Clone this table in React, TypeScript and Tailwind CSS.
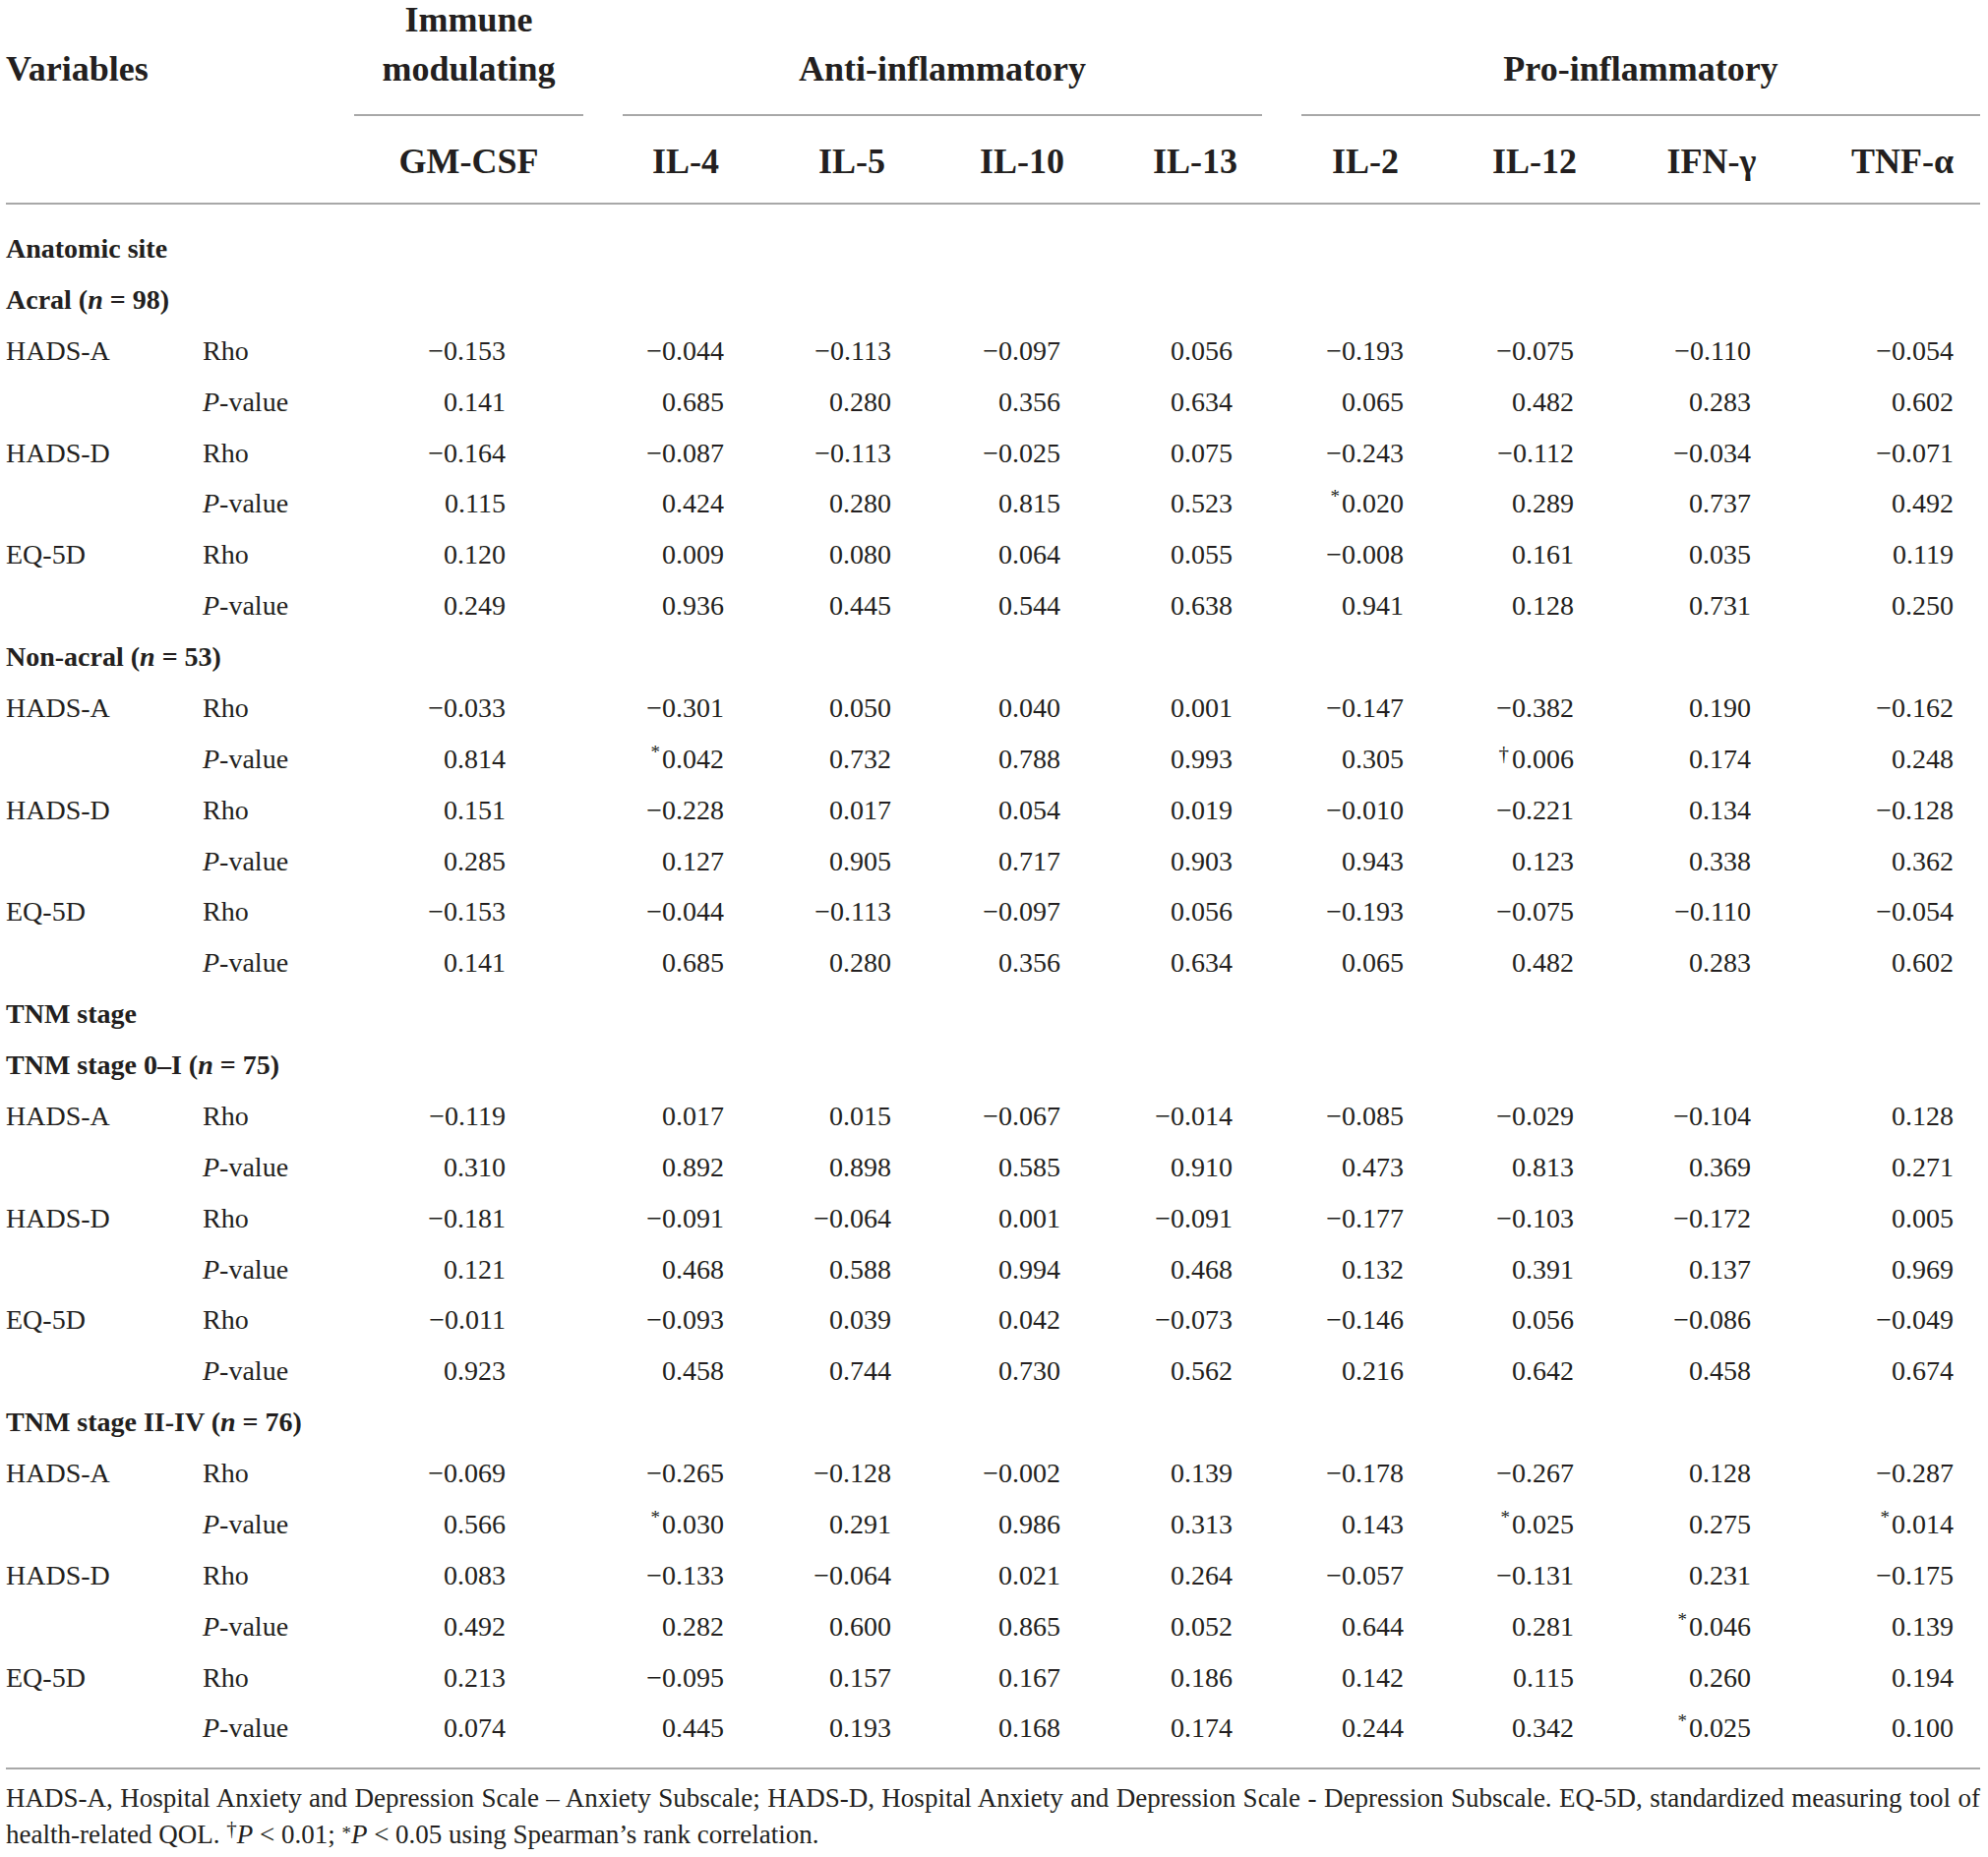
import React from "react";

type Val = string;

const cols = [
  { name: "GM-CSF", hdr: "", pr: "pr-[99px]" },
  { name: "IL-4", hdr: "", pr: "pr-[45px]" },
  { name: "IL-5", hdr: "", pr: "pr-[45px]" },
  { name: "IL-10", hdr: "", pr: "pr-[49px]" },
  { name: "IL-13", hdr: "", pr: "pr-[50px]" },
  { name: "IL-2", hdr: "", pr: "pr-[46px]" },
  { name: "IL-12", hdr: "", pr: "pr-[47px]" },
  { name: "IFN-γ", hdr: "", pr: "pr-[53px]" },
  { name: "TNF-α", hdr: "pl-[22px]", pr: "pr-[27px]" },
];

type Block = { label: string; rho: Val[]; p: Val[] };
type Group = { title: React.ReactNode; blocks: Block[] };
type Section = { title: string; groups: Group[] };

const acralA: Block = {
  label: "HADS-A",
  rho: ["−0.153", "−0.044", "−0.113", "−0.097", "0.056", "−0.193", "−0.075", "−0.110", "−0.054"],
  p: ["0.141", "0.685", "0.280", "0.356", "0.634", "0.065", "0.482", "0.283", "0.602"],
};

const sections: Section[] = [
  {
    title: "Anatomic site",
    groups: [
      {
        title: (
          <>
            Acral (<i>n</i> = 98)
          </>
        ),
        blocks: [
          acralA,
          {
            label: "HADS-D",
            rho: ["−0.164", "−0.087", "−0.113", "−0.025", "0.075", "−0.243", "−0.112", "−0.034", "−0.071"],
            p: ["0.115", "0.424", "0.280", "0.815", "0.523", "*0.020", "0.289", "0.737", "0.492"],
          },
          {
            label: "EQ-5D",
            rho: ["0.120", "0.009", "0.080", "0.064", "0.055", "−0.008", "0.161", "0.035", "0.119"],
            p: ["0.249", "0.936", "0.445", "0.544", "0.638", "0.941", "0.128", "0.731", "0.250"],
          },
        ],
      },
      {
        title: (
          <>
            Non-acral (<i>n</i> = 53)
          </>
        ),
        blocks: [
          {
            label: "HADS-A",
            rho: ["−0.033", "−0.301", "0.050", "0.040", "0.001", "−0.147", "−0.382", "0.190", "−0.162"],
            p: ["0.814", "*0.042", "0.732", "0.788", "0.993", "0.305", "†0.006", "0.174", "0.248"],
          },
          {
            label: "HADS-D",
            rho: ["0.151", "−0.228", "0.017", "0.054", "0.019", "−0.010", "−0.221", "0.134", "−0.128"],
            p: ["0.285", "0.127", "0.905", "0.717", "0.903", "0.943", "0.123", "0.338", "0.362"],
          },
          { ...acralA, label: "EQ-5D" },
        ],
      },
    ],
  },
  {
    title: "TNM stage",
    groups: [
      {
        title: (
          <>
            TNM stage 0–I (<i>n</i> = 75)
          </>
        ),
        blocks: [
          {
            label: "HADS-A",
            rho: ["−0.119", "0.017", "0.015", "−0.067", "−0.014", "−0.085", "−0.029", "−0.104", "0.128"],
            p: ["0.310", "0.892", "0.898", "0.585", "0.910", "0.473", "0.813", "0.369", "0.271"],
          },
          {
            label: "HADS-D",
            rho: ["−0.181", "−0.091", "−0.064", "0.001", "−0.091", "−0.177", "−0.103", "−0.172", "0.005"],
            p: ["0.121", "0.468", "0.588", "0.994", "0.468", "0.132", "0.391", "0.137", "0.969"],
          },
          {
            label: "EQ-5D",
            rho: ["−0.011", "−0.093", "0.039", "0.042", "−0.073", "−0.146", "0.056", "−0.086", "−0.049"],
            p: ["0.923", "0.458", "0.744", "0.730", "0.562", "0.216", "0.642", "0.458", "0.674"],
          },
        ],
      },
      {
        title: (
          <>
            TNM stage II-IV (<i>n</i> = 76)
          </>
        ),
        blocks: [
          {
            label: "HADS-A",
            rho: ["−0.069", "−0.265", "−0.128", "−0.002", "0.139", "−0.178", "−0.267", "0.128", "−0.287"],
            p: ["0.566", "*0.030", "0.291", "0.986", "0.313", "0.143", "*0.025", "0.275", "*0.014"],
          },
          {
            label: "HADS-D",
            rho: ["0.083", "−0.133", "−0.064", "0.021", "0.264", "−0.057", "−0.131", "0.231", "−0.175"],
            p: ["0.492", "0.282", "0.600", "0.865", "0.052", "0.644", "0.281", "*0.046", "0.139"],
          },
          {
            label: "EQ-5D",
            rho: ["0.213", "−0.095", "0.157", "0.167", "0.186", "0.142", "0.115", "0.260", "0.194"],
            p: ["0.074", "0.445", "0.193", "0.168", "0.174", "0.244", "0.342", "*0.025", "0.100"],
          },
        ],
      },
    ],
  },
];

function Num({ v }: { v: string }) {
  if (v.startsWith("*")) {
    return (
      <span>
        <span className="relative top-[-10px] mr-[2px] text-[19px]">*</span>
        {v.slice(1)}
      </span>
    );
  }
  if (v.startsWith("†")) {
    return (
      <span>
        <span className="relative top-[-8px] mr-[3px] text-[21px]">†</span>
        {v.slice(1)}
      </span>
    );
  }
  return <span>{v}</span>;
}

const GRID =
  "grid grid-cols-[200px_134px_273px_168px_170px_176px_176px_170px_174px_186px_180px]";

function DataRow({ label, kind, vals }: { label: string; kind: "rho" | "p"; vals: Val[] }) {
  return (
    <>
      <div className="h-[51.88px] leading-[51.88px] whitespace-nowrap">{label}</div>
      <div className="h-[51.88px] leading-[51.88px] whitespace-nowrap">
        {kind === "rho" ? "Rho" : (
          <>
            <i>P</i>-value
          </>
        )}
      </div>
      {vals.map((v, i) => (
        <div
          key={i}
          className={`h-[51.88px] leading-[51.88px] whitespace-nowrap text-right ${cols[i].pr}`}
        >
          <Num v={v} />
        </div>
      ))}
    </>
  );
}

function TitleRow({ children }: { children: React.ReactNode }) {
  return (
    <div className="col-span-11 h-[51.88px] leading-[51.88px] font-bold whitespace-nowrap">
      {children}
    </div>
  );
}

export default function App() {
  return (
    <div
      className="w-[2021px] h-[1888px] overflow-hidden bg-white text-[#231f20] pl-[6px]"
      style={{ fontFamily: '"Liberation Serif", "Times New Roman", serif' }}
    >
      <div className="w-[2007px]">
        {/* Header */}
        <div className={`${GRID} text-[36px] font-bold leading-[52px]`}>
          <div className="col-span-2 flex flex-col justify-end pb-[22px]">Variables</div>
          <div className="px-5 flex flex-col justify-end">
            <div className="text-center pb-[20px] border-b-2 border-[#a8a8a8]">
              <div className="h-[40px] leading-[40px] mb-[4px]">Immune</div>
              <div>modulating</div>
            </div>
          </div>
          <div className="col-span-4 px-5 flex flex-col justify-end">
            <div className="text-center pb-[20px] border-b-2 border-[#a8a8a8]">Anti-inflammatory</div>
          </div>
          <div className="col-span-4 pl-5 flex flex-col justify-end">
            <div className="text-center pb-[20px] border-b-2 border-[#a8a8a8]">Pro-inflammatory</div>
          </div>
          <div className="col-span-2" />
          {cols.map((c) => (
            <div key={c.name} className={`text-center pt-[20px] pb-[16px] whitespace-nowrap ${c.hdr}`}>
              {c.name}
            </div>
          ))}
        </div>
        <div className="h-[2px] bg-[#a8a8a8]" />

        {/* Body */}
        <div className={`${GRID} pt-[19px] pb-[14px] text-[28px]`}>
          {sections.map((s, si) => (
            <React.Fragment key={si}>
              <TitleRow>{s.title}</TitleRow>
              {s.groups.map((g, gi) => (
                <React.Fragment key={gi}>
                  <TitleRow>{g.title}</TitleRow>
                  {g.blocks.map((b, bi) => (
                    <React.Fragment key={bi}>
                      <DataRow label={b.label} kind="rho" vals={b.rho} />
                      <DataRow label="" kind="p" vals={b.p} />
                    </React.Fragment>
                  ))}
                </React.Fragment>
              ))}
            </React.Fragment>
          ))}
        </div>
        <div className="h-[2px] bg-[#a8a8a8]" />

        {/* Footnote */}
        <div className="pt-[11px] text-[27px] leading-[37px]">
          <div className="text-justify [text-align-last:justify]">
            HADS-A, Hospital Anxiety and Depression Scale – Anxiety Subscale; HADS-D, Hospital Anxiety and Depression Scale - Depression Subscale. EQ-5D, standardized measuring tool of
          </div>
          <div className="whitespace-nowrap">
            health-related QOL. <span className="relative top-[-8px] text-[21px]">†</span>
            <i>P</i> &lt; 0.01; <span className="relative top-[-4px] text-[19px]">*</span>
            <i>P</i> &lt; 0.05 using Spearman’s rank correlation.
          </div>
        </div>
      </div>
    </div>
  );
}
